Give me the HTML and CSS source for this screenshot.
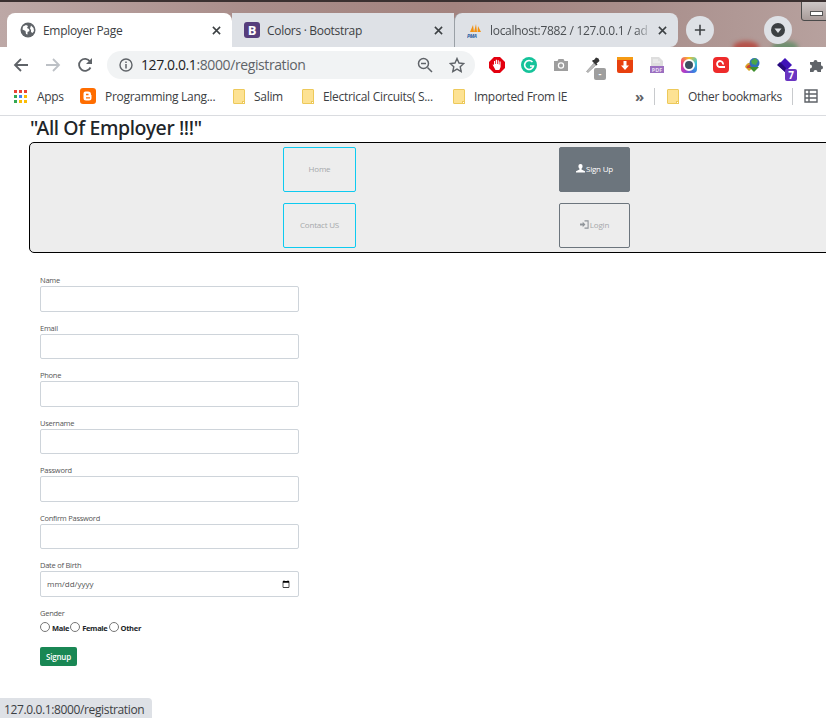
FILE: index.html
```html
<!DOCTYPE html>
<html lang="en">
<head>
    <meta charset="UTF-8">
    <meta name="viewport" content="width=device-width, initial-scale=1.0">
    <title>Employer Page</title>
    <link rel="stylesheet" href="styles.css">
</head>
<body>
    <!-- Browser tabs -->
    <div class="tabstrip">
        <div class="wallpaper-blur red"></div>
        <div class="wallpaper-blur green"></div>
        <div class="tab tab-active">
            <svg class="tab-icon" viewBox="0 0 16 16"><circle cx="8" cy="8" r="7.5" fill="#5f6368"/><path d="M3 4.500 6 3l2 1-1 2 2 1 .5 2-2 1v2.500L6 12 5.500 9 2.500 7.500zM11 3.500l2.500 2.500.5 3-1.500 2-1.500-1V8L10 6.500z" fill="#fff"/></svg>
            <span class="tab-title">Employer Page</span>
            <svg class="tab-close" viewBox="0 0 10 10"><path d="M1 1l8 8M9 1l-8 8" stroke="#3c4043" stroke-width="1.700"/></svg>
        </div>
        <div class="tab">
            <span class="tab-icon bootstrap-icon">B</span>
            <span class="tab-title">Colors · Bootstrap</span>
            <svg class="tab-close" viewBox="0 0 10 10"><path d="M1 1l8 8M9 1l-8 8" stroke="#3c4043" stroke-width="1.700"/></svg>
        </div>
        <div class="tab tab-last">
            <svg class="tab-icon" viewBox="0 0 16 16"><path d="M3 10 6 3l1 7zM7 10l2-8 1 8zM10.500 10 11 4l3 6z" fill="#f29111"/><text x="0" y="15.500" class="pma-text">PMA</text></svg>
            <span class="tab-title tab-fade">localhost:7882 / 127.0.0.1 / ad</span>
            <svg class="tab-close" viewBox="0 0 10 10"><path d="M1 1l8 8M9 1l-8 8" stroke="#3c4043" stroke-width="1.700"/></svg>
        </div>
        <div class="round-btn new-tab">
            <svg viewBox="0 0 14 14"><path d="M7 1v12M1 7h12" stroke="#3c4043" stroke-width="1.800"/></svg>
        </div>
        <div class="round-btn profile">
            <svg viewBox="0 0 14 14"><circle cx="7" cy="7" r="7" fill="#3c4043"/><path d="M3.500 5.500h7L7 10z" fill="#dee1e6"/></svg>
        </div>
        <div class="window-btn"><span></span></div>
    </div>

    <!-- Address bar and extensions -->
    <div class="toolbar">
        <svg class="nav-icon" viewBox="0 0 16 16"><path d="M15 8H2M8 2 2 8l6 6" fill="none" stroke="#5f6368" stroke-width="1.800"/></svg>
        <svg class="nav-icon" viewBox="0 0 16 16"><path d="M1 8h13M8 2l6 6-6 6" fill="none" stroke="#bdc1c6" stroke-width="1.800"/></svg>
        <svg class="nav-icon" viewBox="0 0 16 16"><path d="M13.500 10.500A6 6 0 1 1 13 4.500" fill="none" stroke="#5f6368" stroke-width="1.800"/><path d="M15 1v6H9z" fill="#5f6368"/></svg>
        <div class="omnibox">
            <svg class="info-icon" viewBox="0 0 14 14"><circle cx="7" cy="7" r="6" fill="none" stroke="#5f6368" stroke-width="1.400"/><path d="M7 6v4.500M7 3.500v1.400" stroke="#5f6368" stroke-width="1.500"/></svg>
            <span class="url"><b>127.0.0.1</b>:8000/registration</span>
            <svg class="omni-icon zoom-icon" viewBox="0 0 16 16"><circle cx="6.500" cy="6.500" r="5" fill="none" stroke="#5f6368" stroke-width="1.500"/><path d="M10.500 10.500 15 15M4 6.500h5" stroke="#5f6368" stroke-width="1.500"/></svg>
            <svg class="omni-icon star-icon" viewBox="0 0 16 16"><path d="M8 1.500l2 4.500 4.800.5-3.600 3.200 1 4.800L8 12.100 3.800 14.500l1-4.800L1.200 6.500 6 6z" fill="none" stroke="#5f6368" stroke-width="1.400"/></svg>
        </div>
        <div class="extensions">
            <div class="ext"><svg viewBox="0 0 16 16"><path d="M5 0h6l5 5v6l-5 5H5l-5-5V5z" fill="#e3000f"/><path d="M3.500 7.500 5 7.800V4h1.100v3h.7V2.800H8V7h.7V3.200h1.100V7.500h.7V4.500h1.100v5.500l-1.300 3H6.500z" fill="#fff"/></svg></div>
            <div class="ext"><svg viewBox="0 0 16 16"><circle cx="8" cy="8" r="8" fill="#15c39a"/><path d="M11.500 5A4.500 4.500 0 1 0 12.500 9H9" fill="none" stroke="#fff" stroke-width="1.600"/></svg></div>
            <div class="ext"><svg viewBox="0 0 16 16"><path d="M1 4h3.500l1-2h5l1 2H15v10H1z" fill="#9e9e9e"/><circle cx="8" cy="8.500" r="3.200" fill="#fff"/><circle cx="8" cy="8.500" r="2" fill="#9e9e9e"/></svg></div>
            <div class="ext"><svg viewBox="0 0 16 16"><path d="M1.500 14.500 9 6l2 2-8 7.500z" fill="#bdbdbd" stroke="#8a8a8a" stroke-width=".6"/><path d="M9 3l2-2.500 2.500 1 1 2.500-3 2.500 1 1-1 1L7 4l1-1z" fill="#333"/></svg><span class="ext-badge gray">-</span></div>
            <div class="ext"><svg viewBox="0 0 16 16"><rect width="16" height="16" rx="2" fill="#e8400f"/><rect width="16" height="3" fill="#f59a14"/><path d="M6.500 4h3v4.500H12L8 13 4 8.500h2.500z" fill="#fff"/></svg></div>
            <div class="ext"><svg viewBox="0 0 16 16"><path d="M2 0h8l4 4v6H2z" fill="#dedede"/><path d="M4 3h5M4 5h7" stroke="#f5f5f5"/><rect x="1" y="9" width="14" height="7" fill="#9b6fc0"/><text x="8" y="14.800" class="pdf-text">PDF</text></svg></div>
            <div class="ext"><div class="ring-icon"><span></span></div></div>
            <div class="ext"><svg viewBox="0 0 16 16"><rect width="16" height="16" rx="4" fill="#ee2b2b"/><path d="M12 10H7a3 3 0 1 1 3-2.500" fill="none" stroke="#fff" stroke-width="1.800"/></svg></div>
            <div class="ext"><svg viewBox="0 0 16 16"><path d="M0 10a5 5 0 0 1 6-4l2 5-4 3z" fill="#d9a329"/><path d="M1.500 11a3.500 3.500 0 0 1 4.500-3l1 3z" fill="#cf3f33"/><circle cx="9.500" cy="6" r="5" fill="#2f6fb8"/><path d="M6 4l4-3 3 3-2 4-4-1z" fill="#4aa54a"/><path d="M4 10h10l-5 5z" fill="#3f8f2e"/></svg></div>
            <div class="ext"><svg viewBox="0 0 16 16"><path d="M8 1 15 8l-7 7-7-7z" fill="#3f12b8"/><path d="M0 8l3-3 6 6-1 4z" fill="#27097f"/></svg><span class="ext-badge purple">7</span></div>
            <div class="ext"><svg viewBox="0 0 16 16"><path d="M1 5h3.500a2 2 0 1 1 4 0H12v3.500a2 2 0 1 1 0 4V15H8.500a2 2 0 1 0-4 0H1v-3.500a2 2 0 1 0 0-4z" fill="#5f6368"/></svg></div>
        </div>
    </div>

    <!-- Bookmarks -->
    <div class="bookmarks">
        <div class="bm">
            <svg class="apps-icon" viewBox="0 0 13 13">
                <rect width="3" height="3" fill="#ea4335"/><rect x="5" width="3" height="3" fill="#ea4335"/><rect x="10" width="3" height="3" fill="#ea4335"/>
                <rect y="5" width="3" height="3" fill="#34a853"/><rect x="5" y="5" width="3" height="3" fill="#4285f4"/><rect x="10" y="5" width="3" height="3" fill="#fbbc05"/>
                <rect y="10" width="3" height="3" fill="#34a853"/><rect x="5" y="10" width="3" height="3" fill="#fbbc05"/><rect x="10" y="10" width="3" height="3" fill="#fbbc05"/>
            </svg>
            <span class="bm-text">Apps</span>
        </div>
        <div class="bm">
            <svg class="blogger-icon" viewBox="0 0 16 16"><rect width="16" height="16" rx="3" fill="#ff6d00"/><path d="M5.500 3.500H8A3 3 0 0 1 11 6.500v.5h.5v3a2.500 2.500 0 0 1-2.500 2.500H6A2.500 2.500 0 0 1 3.500 10V5.500a2 2 0 0 1 2-2z" fill="#fff"/><path d="M6 6.500h2.500M6 9.800h4" stroke="#ff6d00" stroke-width="1.300"/></svg>
            <span class="bm-text">Programming Lang...</span>
        </div>
        <div class="bm"><span class="folder"></span><span class="bm-text">Salim</span></div>
        <div class="bm"><span class="folder"></span><span class="bm-text">Electrical Circuits( S...</span></div>
        <div class="bm"><span class="folder"></span><span class="bm-text">Imported From IE</span></div>
        <div class="bm-more">»</div>
        <div class="bm-sep"></div>
        <div class="bm"><span class="folder"></span><span class="bm-text">Other bookmarks</span></div>
        <div class="bm-sep"></div>
        <svg class="reading-icon" viewBox="0 0 14 14"><path d="M1 1h12v12H1zM1 5h12M1 9h12M5 1v12" fill="none" stroke="#5f6368" stroke-width="1.400"/></svg>
    </div>

    <!-- Page -->
    <main class="page">
        <h3 class="page-title">"All Of Employer !!!"</h3>
        <nav class="nav-box">
            <a class="nav-btn btn-info">Home</a>
            <a class="nav-btn btn-dark">
                <svg class="glyph" viewBox="0 0 10 10"><path d="M5 0a2.300 2.300 0 0 1 2.300 2.500c0 1.300-.6 2.300-1.200 2.800v.8L10 8v1.500H0V8l3.900-1.900v-.8C3.300 4.800 2.700 3.800 2.700 2.500A2.300 2.300 0 0 1 5 0z" fill="#fff"/></svg>Sign Up
            </a>
            <a class="nav-btn btn-info">Contact US</a>
            <a class="nav-btn btn-outline">
                <svg class="glyph" viewBox="0 0 10 10"><path d="M0 4h3V2l3 3-3 3V6H0z" fill="#8f9499"/><path d="M5 1h4v8H5" fill="none" stroke="#8f9499" stroke-width="1.200"/></svg>Login
            </a>
        </nav>

        <form class="signup-form">
            <div class="field"><label>Name</label><input class="input" type="text"></div>
            <div class="field"><label>Email</label><input class="input" type="email"></div>
            <div class="field"><label>Phone</label><input class="input" type="text"></div>
            <div class="field"><label>Username</label><input class="input" type="text"></div>
            <div class="field"><label>Password</label><input class="input" type="password"></div>
            <div class="field"><label>Confirm Password</label><input class="input" type="password"></div>
            <div class="field"><label>Date of Birth</label><input class="input date-input" type="date"></div>
            <div class="gender">
                <label>Gender</label>
                <div class="radios">
                    <input type="radio" name="gender"><b>Male</b>
                    <input type="radio" name="gender"><b>Female</b>
                    <input type="radio" name="gender"><b>Other</b>
                </div>
            </div>
            <button class="signup-btn" type="button">Signup</button>
        </form>
    </main>

    <div class="status-bubble">127.0.0.1:8000/registration</div>
</body>
</html>
```

FILE: styles.css
```css
html, body {
    margin: 0;
    height: 718px;
    overflow: hidden;
    background: #fff;
}

body {
    position: relative;
    font-family: "Open Sans", "Noto Sans", sans-serif;
    color: #212529;
}

/* tab strip */
.tabstrip {
    position: relative;
    display: flex;
    box-sizing: border-box;
    height: 47px;
    padding: 13px 0 0 7px;
    overflow: hidden;
    border-top: 2px solid #3a3030;
    background: linear-gradient(90deg, #bda8a6 0%, #a98d8a 30%, #a3837f 55%, #a98f8c 78%, #b7a19e 100%);
}

.wallpaper-blur {
    position: absolute;
    top: 39px;
    width: 26px;
    height: 12px;
    border-radius: 50%;
    filter: blur(2px);
}

.wallpaper-blur.red {
    left: 733px;
    background: #b5524a;
}

.wallpaper-blur.green {
    left: 772px;
    background: #6f8f70;
}

.tab {
    position: relative;
    display: flex;
    align-items: center;
    box-sizing: border-box;
    width: 222px;
    height: 34px;
    margin-top: -2px;
    padding: 0 7px 0 12px;
    background: #dee1e6;
    font-size: 12px;
    letter-spacing: -0.3px;
    color: #3c4043;
}

.tab-active {
    width: 225px;
    padding: 0 7px 0 13px;
    background: #fff;
    border-radius: 8px 8px 0 0;
}

.tab-last {
    width: 224px;
    border-radius: 8px 8px 8px 0;
    border-left: 1px solid #9aa0a6;
}

.tab-icon {
    flex: none;
    width: 16px;
    height: 16px;
    margin-right: 7px;
}

.bootstrap-icon {
    box-sizing: border-box;
    border-radius: 3px;
    background: #563d7c;
    color: #fff;
    font-size: 13px;
    font-weight: 700;
    line-height: 16px;
    text-align: center;
}

.pma-text {
    font-size: 5px;
    font-weight: 700;
    font-style: italic;
    fill: #2b5c9e;
}

.tab-title {
    flex: 1;
    overflow: hidden;
    white-space: nowrap;
}

.tab-fade {
    color: #4a4e52;
    -webkit-mask-image: linear-gradient(90deg, #000 90%, transparent 100%);
    mask-image: linear-gradient(90deg, #000 90%, transparent 100%);
}

.tab-close {
    flex: none;
    width: 9px;
    height: 9px;
    margin: 0 4px 0 6px;
}

.round-btn {
    position: absolute;
    top: 14px;
    display: flex;
    align-items: center;
    justify-content: center;
    width: 28px;
    height: 28px;
    border-radius: 50%;
    background: #dee1e6;
}

.new-tab {
    left: 686px;
}

.new-tab svg {
    width: 12px;
    height: 12px;
}

.profile {
    left: 764px;
}

.profile svg {
    width: 14px;
    height: 14px;
}

.window-btn {
    position: absolute;
    top: -2px;
    left: 801px;
    box-sizing: border-box;
    width: 30px;
    height: 21px;
    padding: 10px 0 0 8px;
    border: 1px solid #4a4a4a;
    border-radius: 0 0 0 3px;
    background: linear-gradient(#cfc9c8, #a89b99);
}

.window-btn span {
    display: block;
    width: 11px;
    height: 3px;
    border: 1px solid #555;
    background: #fff;
}

/* toolbar */
.toolbar {
    display: flex;
    align-items: center;
    box-sizing: border-box;
    height: 36px;
    padding-left: 5px;
    padding-bottom: 1px;
    background: #fff;
}

.nav-icon {
    flex: none;
    width: 16px;
    height: 16px;
    padding: 0 8px;
}

.omnibox {
    display: flex;
    flex: none;
    align-items: center;
    box-sizing: border-box;
    width: 368px;
    height: 28px;
    margin-left: 6px;
    padding: 0 10px 0 12px;
    border-radius: 14px;
    background: #f1f3f4;
}

.info-icon {
    width: 14px;
    height: 14px;
    margin-right: 8px;
}

.url {
    flex: 1;
    font-size: 14px;
    letter-spacing: -0.4px;
    color: #5f6368;
}

.url b {
    font-weight: 400;
    color: #202124;
}

.omni-icon {
    width: 16px;
    height: 16px;
}

.zoom-icon {
    margin-right: 16px;
}

.extensions {
    display: flex;
    flex: none;
    margin-left: 6px;
}

.ext {
    position: relative;
    display: flex;
    align-items: center;
    justify-content: center;
    width: 32px;
    height: 28px;
}

.ext svg {
    width: 16px;
    height: 16px;
}

.pdf-text {
    font-size: 5.500px;
    font-weight: 700;
    fill: #e9dff3;
    text-anchor: middle;
}

.ext-badge {
    position: absolute;
    display: block;
    width: 12px;
    height: 12px;
    border-radius: 2px;
    color: #fff;
    font-size: 9px;
    font-weight: 700;
    line-height: 12px;
    text-align: center;
}

.ext-badge.gray {
    top: 17px;
    left: 17px;
    background: #9e9e9e;
}

.ext-badge.purple {
    top: 18px;
    left: 16px;
    background: #6a35c2;
    font-size: 10px;
}

.ring-icon {
    box-sizing: border-box;
    width: 16px;
    height: 16px;
    padding: 2px;
    border-radius: 4px;
    background: conic-gradient(#f6c026, #3bc7d8, #3a7de0, #b03cc8, #ee3f7e, #f6c026);
}

.ring-icon span {
    display: block;
    width: 12px;
    height: 12px;
    box-sizing: border-box;
    border: 2px solid #fff;
    border-radius: 50%;
    background: #3d5060;
}

/* bookmarks */
.bookmarks {
    display: grid;
    grid-template-columns: 66px 153px 69px 151px 182px 19px 13px 125px 12px 22px;
    align-items: center;
    box-sizing: border-box;
    height: 33px;
    padding: 0 0 6px 14px;
    border-bottom: 1px solid #dadce0;
    background: #fff;
    font-size: 12px;
    letter-spacing: -0.3px;
    color: #3c4043;
}

.bm {
    display: flex;
    align-items: center;
    white-space: nowrap;
}

.bm-text {
    margin-left: 9px;
}

.apps-icon {
    width: 13px;
    height: 13px;
    margin-right: 1px;
}

.blogger-icon {
    width: 16px;
    height: 16px;
}

.folder {
    position: relative;
    box-sizing: border-box;
    width: 12px;
    height: 15px;
    border: 1px solid #edc95a;
    border-radius: 1px;
    background: #fde293;
}

.folder::after {
    content: "";
    position: absolute;
    right: -1px;
    bottom: -1px;
    width: 3px;
    height: 3px;
    background: #fff;
    border: 1px solid #edc95a;
    box-sizing: border-box;
}

.bm-more {
    font-size: 15px;
    font-weight: 700;
    line-height: 15px;
    color: #5f6368;
}

.bm-sep {
    width: 1px;
    height: 17px;
    background: #c8cacd;
}

.reading-icon {
    width: 14px;
    height: 14px;
}

/* page */
.page {
    width: 1000px;
    padding-left: 29px;
}

.page-title {
    margin: 0;
    padding-left: 1px;
    height: 26px;
    font-family: "Noto Sans", sans-serif;
    font-size: 19.500px;
    font-weight: 500;
    letter-spacing: -0.4px;
    line-height: 23px;
    color: #212529;
}

.nav-box {
    display: grid;
    grid-template-columns: 73px 71px;
    grid-auto-rows: 45px;
    column-gap: 203px;
    row-gap: 11px;
    box-sizing: border-box;
    width: 900px;
    height: 111px;
    padding: 4px 0 0 253px;
    border: 1px solid #000;
    border-radius: 5px;
    background: #ededed;
}

.nav-btn {
    display: flex;
    align-items: center;
    justify-content: center;
    box-sizing: border-box;
    padding-bottom: 2px;
    border: 1px solid;
    border-radius: 2px;
    font-size: 8px;
    letter-spacing: -0.2px;
    color: #a5a8ab;
}

.btn-info {
    border-color: #0dcaf0;
}

.btn-dark {
    border-color: #6c757d;
    background: #6c757d;
    color: #fff;
}

.btn-outline {
    border-color: #6c757d;
}

.glyph {
    width: 9px;
    height: 9px;
    margin-right: 1px;
}

/* form */
.signup-form {
    width: 259px;
    padding: 22px 0 0 11px;
}

.field {
    height: 47.500px;
}

.field label,
.gender label {
    display: block;
    height: 11px;
    font-size: 7.500px;
    letter-spacing: -0.25px;
    line-height: 11px;
    color: #555;
}

.input {
    display: block;
    box-sizing: border-box;
    width: 259px;
    height: 25.500px;
    padding: 2px 6px;
    border: 1px solid #ced4da;
    border-radius: 2px;
    background: #fff;
    font-family: inherit;
    font-size: 8px;
    color: #555;
}

.date-input::-webkit-datetime-edit-fields-wrapper,
.date-input::-webkit-datetime-edit-text,
.date-input::-webkit-datetime-edit-month-field,
.date-input::-webkit-datetime-edit-day-field,
.date-input::-webkit-datetime-edit-year-field {
    padding: 0;
}

.gender {
    height: 36px;
}

.radios {
    display: flex;
    align-items: center;
    height: 16px;
    font-size: 7.500px;
    letter-spacing: -0.3px;
    color: #212529;
}

.radios input {
    width: 10px;
    height: 10px;
    margin: 0 2px 0 0;
}

.radios b {
    margin: 3px 1px 0 0;
}

.signup-btn {
    display: block;
    width: 37px;
    height: 19px;
    margin-top: 3px;
    padding: 0;
    border: 0;
    border-radius: 2px;
    background: #198754;
    color: #fff;
    font-family: inherit;
    font-size: 8px;
    font-weight: 600;
    letter-spacing: -0.2px;
}

.status-bubble {
    position: absolute;
    left: 0;
    bottom: 0;
    box-sizing: border-box;
    width: 152px;
    height: 20px;
    padding-left: 4px;
    border-radius: 0 4px 0 0;
    background: #dee1e6;
    font-size: 12px;
    letter-spacing: -0.37px;
    line-height: 24px;
    color: #3c4043;
    white-space: nowrap;
}
```
